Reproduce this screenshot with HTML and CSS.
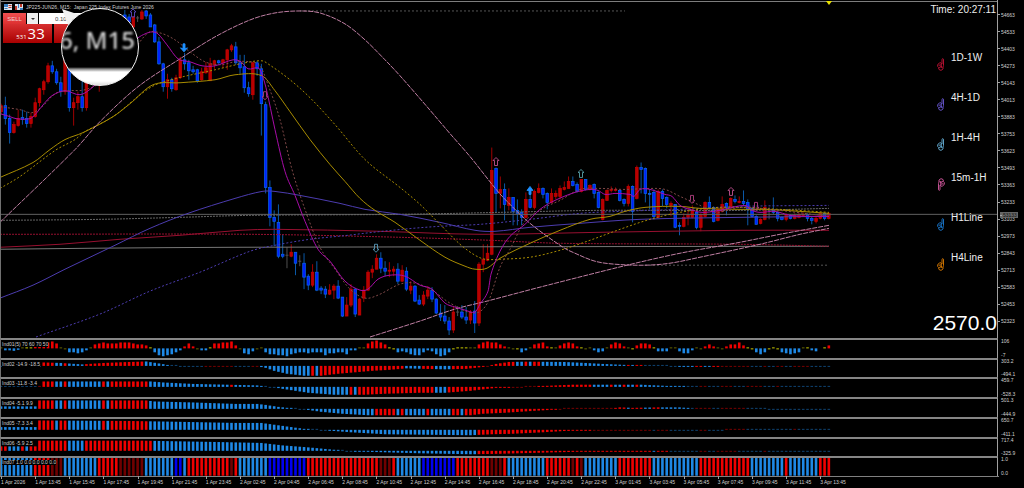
FILE: index.html
```html
<!DOCTYPE html>
<html lang="en">
<head>
  <meta charset="utf-8">
  <meta name="viewport" content="width=device-width, initial-scale=1.0">
  <title>JP225-JUN26, M15</title>
  <link rel="stylesheet" href="styles.css">
</head>
<body>
  <main class="terminal">
    <section class="pane main-pane">
      <div class="plot">
        <svg class="canvas" id="price" viewBox="1 0 996 339" preserveAspectRatio="none"></svg>

        <header class="title-bar">
          <svg class="title-icon" viewBox="0 0 8 6"><path fill="#d8e4ee" d="M0 0h8v6H0z"/><path fill="#3b7fc0" d="M0 0h4v3H0z"/><path fill="#c0392b" d="M4.500 1h3v1h-3zM4.500 3h3v1h-3z"/><path fill="#3b7fc0" d="M.5 4h3v1h-3z"/></svg>
          <svg class="title-icon" viewBox="0 0 8 6"><path fill="#d8e4ee" d="M0 0h8v6H0z"/><path fill="#c0392b" d="M0 2h2v4H0zM5 0h2v3H5z"/><path fill="#3b7fc0" d="M3 0h1v4H3zM5 4h3v2H5z"/></svg>
          <span>JP225-JUN26, M15:&nbsp; Japan 225 Index Futures June 2026</span>
        </header>

        <form class="trade">
          <div class="trade-top">
            <button type="button" class="sell">SELL</button>
            <button type="button" class="drop" aria-label="Volume presets"><svg viewBox="0 0 4 2"><path d="M0 0h4l-2 2z"/></svg></button>
            <input class="volume" type="text" value="0.10" aria-label="Volume">
          </div>
          <div class="trade-prices">
            <button type="button" class="price"><small>531</small>33</button>
            <button type="button" class="price" aria-label="Buy"></button>
          </div>
        </form>

        <svg class="lens-tail" viewBox="0 0 30 30"><path d="M0 0L24 8L10 26Z"/></svg>
        <div class="lens"><span class="lens-text">6, M15</span></div>

        <p class="clock">Time: 20:27:11</p>

        <ul class="signals">
          <li><svg class="hand crimson"><use href="#hand"/></svg>1D-1W</li>
          <li><svg class="hand violet"><use href="#hand"/></svg>4H-1D</li>
          <li><svg class="hand sky"><use href="#hand"/></svg>1H-4H</li>
          <li><svg class="hand pink down"><use href="#hand"/></svg>15m-1H</li>
          <li><svg class="hand blue"><use href="#hand"/></svg>H1Line</li>
          <li><svg class="hand orange"><use href="#hand"/></svg>H4Line</li>
        </ul>

        <p class="total">2570.0</p>
      </div>
      <div class="scale price-scale" id="priceScale"></div>
    </section>

    <section class="pane"><div class="plot"><svg class="canvas" id="ind1"></svg><span class="name">Ind01(5) 70 60 70 50</span></div><div class="scale"><span>106</span><span>-7</span></div></section>
    <section class="pane"><div class="plot"><svg class="canvas" id="ind2"></svg><span class="name">Ind02 -14.9 -18.5</span></div><div class="scale"><span>303.2</span><span>-494.1</span></div></section>
    <section class="pane"><div class="plot"><svg class="canvas" id="ind3"></svg><span class="name">Ind03 -11.8 -3.4</span></div><div class="scale"><span>459.7</span><span>-528.3</span></div></section>
    <section class="pane"><div class="plot"><svg class="canvas" id="ind4"></svg><span class="name">Ind04 -5.1 9.9</span></div><div class="scale"><span>501.3</span><span>-444.9</span></div></section>
    <section class="pane"><div class="plot"><svg class="canvas" id="ind5"></svg><span class="name">Ind05 -7.3 3.4</span></div><div class="scale"><span>650.7</span><span>-411.1</span></div></section>
    <section class="pane"><div class="plot"><svg class="canvas" id="ind6"></svg><span class="name">Ind06 -5.9 2.5</span></div><div class="scale"><span>717.4</span><span>-325.9</span></div></section>
    <section class="pane"><div class="plot"><svg class="canvas" id="ind7"></svg><span class="name">Ind07 1.0 0.0 0.0 0.0 0.0</span></div><div class="scale"><span>1.0</span><span>0.0</span></div></section>

    <footer class="dates"><div class="date-row" id="dates"></div></footer>
  </main>

  <svg class="defs">
    <symbol id="hand" viewBox="0 0 8 13">
      <path d="M5 6V1.200Q5.800 0 6.500 1.200V7.500L6 9V11Q4 13.500 2 11.500L1.500 9.500L.7 8.500V6.500L2.500 5L4 4.800L5 6L3 7.200L1.500 7M3 8.500L4.500 7.500V9.500M2 9.500Q4 8.500 5.500 9.500"/>
    </symbol>
  </svg>
  <script src="chart.js"></script>
</body>
</html>
```
FILE: styles.css
```css
* {
  box-sizing: border-box;
}
body {
  margin: 0;
  background-color: #000;
  color: #d0d0d0;
  font-family: "Liberation Sans", Arial, sans-serif;
  font-size: 5px;
  line-height: 6px;
}
button, input {
  font-family: inherit;
  margin: 0;
  padding: 0;
  border: none;
}
.terminal {
  display: grid;
  grid-template-rows: minmax(0, 120fr) repeat(7, minmax(0, 7fr)) 12px;
  height: 100vh;
}
.pane {
  display: grid;
  grid-template-columns: 1fr 26px;
  grid-template-rows: minmax(0, 1fr);
  min-height: 0;
}
.plot {
  position: relative;
  min-width: 0;
  min-height: 0;
  border-top: 2px solid #858585;
  border-left: 1px solid #707070;
  border-right: 1px solid #a0a0a0;
}
.main-pane .plot {
  border-top: none;
}
.canvas {
  display: block;
  width: 100%;
  height: 100%;
}
.defs {
  position: absolute;
  width: 0;
  height: 0;
}

/* scales */
.scale {
  display: flex;
  flex-direction: column;
  justify-content: space-between;
  min-height: 0;
  padding-left: 3px;
}
.price-scale {
  position: relative;
  padding: 6px 0 8px;
}
.price-scale span {
  flex: 1;
  display: flex;
  align-items: center;
  gap: 1px;
}
.price-scale span::before {
  content: "";
  width: 2px;
  height: 1px;
  background-color: #a0a0a0;
}
.price-scale .bid {
  position: absolute;
  top: 212px;
  left: 2px;
  height: 6px;
  padding-right: 1px;
  background-color: #666;
  color: #111;
}
.name {
  position: absolute;
  top: 2px;
  left: 1px;
  background-color: #000;
  line-height: 5px;
  white-space: nowrap;
}
.dates {
  padding-right: 26px;
  background: linear-gradient(#808080, #808080) 0 0 / calc(100% - 25px) 1px no-repeat;
}
.date-row {
  display: grid;
  grid-template-columns: repeat(25, 1fr);
  width: 85.5%;
  margin-left: 1px;
}
.date-row span {
  padding: 3px 0 1px;
  white-space: nowrap;
  background: linear-gradient(#a0a0a0, #a0a0a0) 0 0 / 1px 3px no-repeat;
}

/* title and one click trading */
.title-bar {
  position: absolute;
  top: 4px;
  left: 3px;
  display: flex;
  gap: 3px;
  align-items: center;
  white-space: nowrap;
}
.title-icon {
  width: 8px;
  height: 6px;
}
.trade {
  position: absolute;
  top: 13px;
  left: 2px;
  width: 100px;
}
.trade-top {
  display: flex;
  height: 11px;
}
.sell {
  width: 23px;
  background: linear-gradient(#f25050, #dd3030);
  color: #f3d0d0;
  font-size: 6px;
}
.drop {
  width: 11px;
  margin: 0 1px;
  background-color: #eee;
}
.drop svg {
  display: block;
  width: 4px;
  height: 2px;
  margin: 0 auto;
  fill: #333;
}
.volume {
  flex: 1;
  min-width: 0;
  padding-left: 16px;
  background-color: #fff;
  color: #444;
  font-size: 6px;
}
.trade-prices {
  display: flex;
  gap: 2px;
}
.price {
  flex: 1;
  height: 19px;
  padding-left: 6px;
  background: linear-gradient(#d83030, #a80000);
  color: #fff;
  font-family: "Open Sans", "Noto Sans", sans-serif;
  font-size: 15px;
  line-height: 19px;
}
.price small {
  margin-right: 1px;
  font-size: 6px;
}

/* magnifier */
.lens-tail {
  position: absolute;
  top: 9px;
  left: 61px;
  width: 30px;
  height: 30px;
  fill: #f2f2f2;
}
.lens {
  position: absolute;
  top: 8px;
  left: 60px;
  width: 78px;
  height: 78px;
  overflow: hidden;
  border: 1px solid #f2f2f2;
  border-radius: 50%;
  background: linear-gradient(#000 58px, #888 60px, #fff 63px, #fff 72px, #ddd);
}
.lens-text {
  position: absolute;
  top: 16px;
  right: 3px;
  color: #d0d0d0;
  font-family: "Noto Sans", sans-serif;
  font-size: 24px;
  font-weight: 500;
  line-height: 30px;
  white-space: nowrap;
  filter: blur(1px);
}

/* right side overlay */
.clock {
  position: absolute;
  top: 4px;
  right: 1px;
  margin: 0;
  color: #eee;
  font-size: 10px;
  line-height: 12px;
}
.signals {
  position: absolute;
  top: 52px;
  right: 0;
  display: flex;
  flex-direction: column;
  gap: 28px;
  width: 60px;
  margin: 0;
  padding: 0;
  list-style: none;
  color: #eee;
  font-size: 10px;
  line-height: 12px;
}
.signals li {
  display: flex;
  gap: 6px;
  height: 12px;
}
.hand {
  flex: none;
  width: 8px;
  height: 13px;
  margin-top: 6px;
  fill: none;
  stroke: currentColor;
  stroke-width: 1;
}
.down {
  transform: rotate(180deg);
}
.crimson { color: #b01030; }
.violet { color: #6050c0; }
.sky { color: #5da0c4; }
.pink { color: #c05090; }
.blue { color: #1870c0; }
.orange { color: #c87000; }
.total {
  position: absolute;
  right: 0;
  bottom: 4px;
  margin: 0;
  color: #fff;
  font-size: 21px;
  line-height: 22px;
}
```
FILE: chart.js
```javascript
const STEP = 4.2667;
const colors = { r: '#f00000', b: '#1e88e5', n: '#0000f0', d: '#700000', y: '#c8c800' };

function xOf(i) {
  return 1.1 + i * STEP;
}

// body top, body bottom, high, low, colour
const candles = `106 112 104 114 r;106 119 97 125 b;119 133 115 144 b;125 133 122 134 r;119 126 110 127 r;118 120 110 125 b;119 124 112 128 b;117 124 113 128 r;103 117 98 118 r;89 103 88 107 r;
82 90 80 95 r;66 82 63 84 r;66 72 61 74 b;72 83 69 85 b;83 92 77 97 b;55 92 40 95 r;55 108 50 112 b;103 108 98 126 r;97 103 92 110 r;97 108 80 112 b;
75 108 70 111 r;72 78 68 84 b;72 80 68 84 r;75 85 70 92 r;60 75 55 80 r;50 62 45 66 r;40 52 36 58 r;30 42 26 46 r;20 32 18 36 r;15 22 10 25 b;
17 22 14 25 b;17 27 16 30 r;18 19 16 22 g;12 19 10 20 r;11 16 10 19 b;15 27 13 27 b;25 42 24 43 b;42 64 37 65 b;64 87 63 92 b;80 87 74 99 r;
80 89 78 92 b;78 90 75 91 r;60 78 57 79 r;60 64 53 70 b;63 71 60 80 b;70 72 66 74 b;70 81 69 83 b;72 80 68 81 r;68 73 62 74 r;64 81 58 81 r;
61 65 60 69 r;61 63 60 64 b;60 63 59 68 r;50 60 49 70 r;46 50 44 52 r;47 63 42 65 b;63 68 55 74 b;67 88 55 93 b;88 94 82 97 b;63 95 62 100 r;
63 69 61 76 b;69 104 64 136 b;105 188 102 194 b;188 218 181 227 b;218 222 211 247 b;223 257 205 259 b;255 257 235 259 b;256 257 248 269 g;253 257 245 258 r;253 264 253 276 b;
262 263 256 267 g;264 278 254 290 b;277 286 275 291 b;273 286 265 288 r;273 291 262 292 b;289 291 287 295 b;290 295 287 299 b;291 295 285 296 r;287 291 285 300 r;287 299 281 300 b;
298 317 298 318 b;306 317 298 317 r;290 306 285 308 r;290 315 289 318 b;300 316 299 316 r;291 299 287 303 r;273 291 271 292 r;270 273 266 279 r;259 270 255 270 r;259 269 253 274 b;
269 272 262 277 b;271 272 263 278 r;270 272 267 277 r;270 282 264 285 b;271 282 266 283 r;272 290 268 292 b;287 291 282 295 r;287 302 286 303 b;301 305 296 306 b;296 305 292 307 r;
291 297 287 300 r;291 300 288 303 b;300 314 299 315 b;314 318 305 322 b;317 322 306 325 b;322 331 318 336 b;313 331 307 334 r;313 315 307 317 g;313 318 306 320 b;318 321 308 325 b;
313 321 311 325 r;312 324 302 334 b;265 324 263 327 r;260 265 245 273 r;254 261 245 262 r;171 255 148 256 r;169 194 168 213 b;190 194 177 209 r;190 205 184 221 b;198 206 189 211 r;
198 212 198 226 b;211 214 200 226 b;213 218 210 226 b;200 218 193 219 r;200 208 192 209 b;192 208 190 210 r;189 193 184 194 r;189 195 188 199 b;194 203 193 210 b;194 203 189 204 r;
194 197 191 200 r;189 197 186 200 r;188 190 182 191 r;182 189 177 189 r;182 186 177 187 b;185 192 183 193 b;180 192 180 193 r;180 190 180 191 b;186 190 185 191 r;185 194 184 199 b;
193 208 192 209 b;200 220 199 221 r;191 201 190 201 r;190 191 187 193 r;190 191 188 192 r;191 201 190 202 b;200 204 199 207 b;187 204 185 207 r;187 212 186 223 b;168 199 166 200 r;
168 170 163 194 b;169 194 168 203 b;194 195 190 210 b;193 217 190 220 b;192 218 190 218 r;192 199 190 207 b;198 205 197 209 b;204 206 202 217 r;205 228 205 229 b;226 227 223 236 b;
218 227 214 228 r;216 218 208 226 r;211 218 206 219 r;213 228 212 230 b;215 228 214 232 r;203 217 202 218 r;203 209 197 210 b;208 222 207 223 b;210 221 208 222 r;205 212 197 213 r;
204 208 203 216 b;199 208 198 208 r;200 202 196 204 b;202 203 197 204 r;202 204 191 207 b;203 210 200 226 b;209 217 208 218 b;217 225 216 225 b;220 224 219 225 r;208 220 201 221 r;
211 212 208 220 g;211 213 198 215 b;213 219 212 222 b;218 220 217 221 b;216 220 214 222 r;216 219 215 220 b;216 219 214 220 r;215 218 213 219 r;215 216 213 217 r;215 219 214 222 b;
219 221 217 225 b;219 222 216 224 r;214 219 213 220 r;214 219 213 221 b;214 219 213 220 r`;

// stroke, dash, points
const lines = [
  ['#606060', '', '0,215 998,215'],
  ['#777', '', '0,250 90,249 240,248 829,247'],
  ['#666', '2 1', '0,221 100,220 180,218 250,216 400,215 500,213 600,211 740,211 829,209'],
  ['#555', '2 2', '300,11 625,11'],
  ['#555', '2 2', '645,266 829,266'],
  ['#981030', '', '0,248 60,245 120,240 180,236 240,231 275,230 380,232 480,235 600,233 740,231 829,231'],
  ['#981030', '2 1', '0,235 250,235 400,238 490,241 560,244 740,245 829,247'],
  ['#4c3cb0', '', '0,299 33,286 65,270 90,258 115,246 150,229 188,214 235,199 262,192 275,192 300,196 340,204 365,210 400,215 440,223 475,231 495,232 530,228 580,224 640,220 740,218 829,217'],
  ['#4c3cb0', '2 2', '36,338 100,315 150,292 200,273 250,252 275,246 310,240 348,236 373,233 413,229 440,227 480,225 530,220 580,214 620,212 680,210 740,207 829,206'],
  ['#a88c00', '', '0,178 33,163 50,150 65,140 83,133 113,117 130,104 153,85 180,83 215,80 235,75 262,76 275,91 290,112 310,140 330,165 345,182 360,199 375,211 395,223 420,241 445,258 465,267 475,270 487,269 500,259 530,244 560,231 590,220 610,217 625,212 645,208 680,207 700,209 740,210 765,210 800,212 829,214'],
  ['#a88c00', '2 2', '0,189 20,177 55,151 75,140 85,132 113,117 150,88 175,79 215,70 245,63 262,61 268,64 290,80 310,98 335,125 365,160 400,188 420,205 440,225 460,245 475,256 485,260 500,260 530,258 560,251 590,241 620,230 650,220 680,213 720,208 780,210 829,213'],
  ['#c080a4', '5 1', '0,223 75,150 100,122 138,87 180,59 215,37 250,20 275,13 300,11 320,13 345,24 365,40 385,60 400,76 427,107 450,134 470,157 497,191 510,205 530,224 563,248 575,254 595,262 615,265 645,266 670,264 700,258 760,245 800,235 829,229'],
  ['#c080a4', '5 1', '370,338 420,322 455,310 487,302 540,288 627,266 680,254 740,243 780,235 829,226'],
  ['#804848', '2 2', '0,107 20,110 32,113 42,107 55,94 67,91 85,90 105,80 130,55 148,33 160,33 175,40 190,52 205,62 220,65 235,62 250,62 260,66 268,85 280,120 292,170 305,210 320,248 335,270 350,290 365,299 378,296 400,285 415,284 432,291 450,304 475,314 488,303 500,268 510,250 525,222 545,208 560,201 580,190 600,189 625,190 650,189 665,190 680,197 700,206 715,213 740,208 770,210 829,217'],
  ['#a80ca8', '', '0,114 10,117 16,119 30,119 36,114 44,104 52,96 65,91 80,95 92,88 110,70 125,50 138,38 145,34 152,32 158,34 167,45 178,59 190,62 202,66 215,66 233,60 241,62 248,69 258,68 261,72 266,88 275,130 285,172 295,196 305,222 318,250 330,262 345,282 360,291 368,290 378,280 390,276 405,277 420,286 432,290 445,304 455,308 465,311 475,313 480,305 488,292 491,275 500,252 510,237 525,225 540,210 555,201 575,193 590,190 598,191 605,195 615,194 630,195 634,197 640,190 650,190 665,195 672,197 680,206 690,210 702,213 720,211 745,206 752,211 760,213 775,212 790,216 810,217 829,217']
];

// x, y, kind, colour
const arrows = [
  [133, 13, 'up', '#5a48c0'], [184, 48, 'downFull', '#1e90ff'], [265, 96, 'down', '#b04080'],
  [376, 249, 'down', '#5898b8'], [496, 162, 'up', '#c05090'], [530, 191, 'upFull', '#1e90ff'],
  [581, 174, 'up', '#58a0a8'], [692, 200, 'down', '#b04080'], [731, 192, 'up', '#c05090'],
  [756, 207, 'down', '#b04080']
];
const arrowPaths = {
  up: 'M0 -4L3 -1H1.500V4H-1.500V-1H-3Z',
  down: 'M0 4L3 1H1.500V-4H-1.500V1H-3Z',
  upFull: 'M0 -4L3 0H1V4H-1V0H-3Z',
  downFull: 'M0 4L3.500 0L1 1V-4H-1V1L-3.500 0Z'
};

// rounds the corners between neighbouring points
function smooth(points) {
  const p = points.split(' ').map(s => s.split(',').map(Number));
  let d = `M${p[0]}`;
  for (let i = 0; i < p.length - 1; i++) {
    const [ax, ay] = p[i];
    const [bx, by] = p[i + 1];
    const [px, py] = p[i - 1] || p[i];
    const [nx, ny] = p[i + 2] || p[i + 1];
    const t = (bx - ax) / 3;
    const sa = (by - py) / (bx - px);
    const sb = (ny - ay) / (nx - ax);
    d += `C${ax + t} ${ay + sa * t} ${bx - t} ${by - sb * t} ${bx} ${by}`;
  }
  return d;
}

function drawPrice() {
  let out = '<path d="M0 1.500H998" stroke="#808080"/>';
  candles.split(';').forEach((row, i) => {
    const [top, bottom, high, low, c] = row.trim().split(' ');
    const x = xOf(i);
    const wick = c === 'r' ? '#a00000' : c === 'b' ? '#0a58a8' : '#505050';
    out += `<path d="M${x} ${high}V${low}" stroke="${wick}"/>`;
    if (c === 'g') {
      out += `<path d="M${x - 1.5} ${top}h3" stroke="#505050"/>`;
    } else {
      const edge = c === 'r' ? '#c80000' : '#0a68e8';
      const fill = c === 'r' ? '#b80000' : '#0020ff';
      out += `<rect x="${x - 1.3}" y="${top}" width="2.600" height="${bottom - top}" fill="${fill}" stroke="${edge}" stroke-width=".7"/>`;
    }
  });
  lines.forEach(([stroke, dash, points]) => {
    out += `<path d="${smooth(points)}" fill="none" stroke="${stroke}" stroke-dasharray="${dash}"/>`;
  });
  arrows.forEach(([x, y, kind, color]) => {
    const fill = kind.includes('Full') ? color : 'none';
    out += `<path transform="translate(${x} ${y})" d="${arrowPaths[kind]}" fill="${fill}" stroke="${color}" stroke-width=".9"/>`;
  });
  out += '<path d="M826 1h6l-3 4z" fill="#e8e000"/>';
  document.getElementById('price').innerHTML = out;
}

const osc = [.5, -2, -2, -2.5, -1.5, .5, 1, 1, 2, 5, 6, 6, 7, 5, .5, -.5, -4, -4, -5, -4, -2, .5, 4, 5, 6, 5, 5, 5, 6, 6, 6, 5, 4, 4, 3, 1,
  -4, -7, -8, -7, -6, -4, -2, 2, 5, 2, -.5, -2, -2, 1, 5, 5, 6, 6, 7, 3, -.5, -5, -6, -3, -.5, .5, -4, -6, -6, -7, -7, -8, -6, -5, -4, -4,
  -5, -4, -4, -4, -7, -5, -5, -4, -4, -6, -2, -2, .5, .5, 5, 7, 8, 6, 4, .8, -.8, -4, -3, -4, -6, -7, -7, -4, -2, -3, -6, -8, -7, -4, -.6,
  1, 1, 1, .5, .5, 4, 6, 7, 6, 6, 4, 2, .5, -.5, -1, -4, -2, .5, 4, 5, 6, 2, 1, .5, 3, 5, 6, 5, 2, 1, -.5, .5, -2, -4, -3, .5, 4, 6, 5, 2,
  .5, -1, 3, 5, 5, 4, 1, -3, -3, -3, .5, .5, -3, -5, -5, -2, .5, -.5, 2, 4, 2, .5, -.5, 2, 4, 4, 6, 3, 1, -1, -4, -6, -4, -1, 1, -1, -4,
  -5, -6, -5, -4, .5, 1, -2, -3, 0, 1, 3];

// base: zero line, keys: [bar, height] pairs, runs: colour + count
const panes = [
  { id: 'ind2', base: 6, keys: [[0, 0], [9, 0], [10, 3.5], [14, 3], [19, 1.5], [24, 3], [30, 4], [34, 4.5], [37, 2.5], [39, 1], [42, -.3], [60, -.4], [62, -2], [64, -5], [67, -8], [71, -10], [75, -10], [79, -8], [83, -6.5], [87, -5], [91, -4], [95, -2.5], [99, -3], [104, -3.5], [109, -3], [113, -1], [116, 2], [119, 4], [123, 4.3], [132, 4], [137, 3], [141, 2], [148, .7], [155, .4], [160, -1], [166, -1], [170, -.4], [194, -.4]],
    runs: 'b10 r3 b2 r1 b4 r14 b14 r7 b4 r2 b12 r1 b1 r20 b4 r3 b4 r15 b2 r1 b1 r2 b20 r1 b1 r2 b12 r2 b2 r9 b3 r1 b2 r2 b2 r4' },
  { id: 'ind3', base: 8, keys: [[0, .3], [8, .3], [9, .5], [10, 5.5], [35, 5.5], [38, 4.5], [45, 3], [55, 2], [60, 1.5], [62, .5], [64, -.5], [66, -2], [69, -4], [72, -6], [78, -8], [85, -8], [90, -7], [98, -6], [104, -6], [110, -4], [116, -1], [120, -.5], [125, .5], [130, 1.5], [134, 2.2], [150, 2.2], [156, 1], [162, .4], [194, .4]],
    runs: 'b9 r4 b2 r1 b8 r1 b1 r9 b19 r1 b27 r1 b1 r18 b3 r34 b4 r1 b2 r1 b2 r1 b14 r2 b3 r3 b3 r4 b3 r1 b12 r1 b1 r1' },
  { id: 'ind4', base: 10, keys: [[0, 2.5], [8, 2.5], [9, 8.5], [34, 8.5], [36, 7.5], [45, 6.5], [55, 5], [60, 5], [62, 4], [65, 2], [68, .6], [71, -.5], [75, -3], [80, -5], [86, -6.5], [110, -6.5], [113, -5], [118, -4], [125, -2], [129, -1], [133, .4], [143, .5], [145, 1.5], [148, 1], [154, 1.5], [159, 1.5], [162, .5], [194, -.4]],
    runs: 'b9 r4 b2 r1 b8 r1 b1 r9 b53 r5 b1 r1 b5 r1 b5 r2 b1 r38 b1 r3 b2 r2 b8 r4 b2 r6 b21' },
  { id: 'ind5', base: 11, keys: [[0, 2.8], [8, 2.8], [9, 9.5], [30, 9], [40, 8.3], [55, 7], [61, 7], [66, 4], [71, 1], [76, -.5], [82, -2.5], [90, -4.5], [110, -5.5], [115, -4.5], [120, -4], [127, -2.5], [132, -1.2], [139, -.5], [194, .4]],
    runs: 'b9 r4 b1 r2 b8 r1 b1 r9 b77 r41 b1 r3 b7 r2 b4 r5 b11 r1 b8' },
  { id: 'ind6', base: 12, keys: [[0, 4.5], [8, 4.5], [9, 10.3], [33, 10.3], [50, 9], [61, 8], [66, 5.5], [72, 3.5], [77, 1.5], [82, -.5], [90, -1.5], [98, -2.5], [110, -3.5], [117, -3], [130, -1.5], [138, -.7], [194, -.4]],
    runs: 'r2 b3 r1 b1 r9 b4 r16 b76 r41 b1 r3 b7 r2 b2 r5 b6 r1 b16' }
];

function expand(runs) {
  return runs.split(' ').map(r => r[0].repeat(Number(r.slice(1)))).join('');
}

function valueAt(keys, i) {
  for (let k = 1; k < keys.length; k++) {
    const [x0, y0] = keys[k - 1];
    const [x1, y1] = keys[k];
    if (i <= x1) {
      return y0 + (y1 - y0) * (i - x0) / (x1 - x0);
    }
  }
  return 0;
}

function bar(i, base, v, color) {
  const h = Math.max(Math.abs(v), 1);
  const y = v > 0 ? base - h : base;
  const faint = Math.abs(v) < .6 ? ' opacity=".5"' : '';
  return `<rect x="${xOf(i) - 1.3}" y="${y}" width="2.600" height="${h}" fill="${color}"${faint}/>`;
}

function paint(id, html) {
  const svg = document.getElementById(id);
  svg.setAttribute('viewBox', '1 0 996 18');
  svg.setAttribute('preserveAspectRatio', 'none');
  svg.innerHTML = html;
}

function drawIndicators() {
  paint('ind1', osc.map((v, i) => {
    if (v === 0) return '';
    const c = Math.abs(v) <= 1 ? 'y' : v > 0 ? 'r' : 'b';
    return bar(i, 8.5, v, colors[c]);
  }).join(''));

  panes.forEach(p => {
    const c = expand(p.runs);
    let html = '';
    for (let i = 0; i < 195; i++) {
      html += bar(i, p.base, valueAt(p.keys, i), colors[c[i] || 'b']);
    }
    paint(p.id, html);
  });

  const full = expand('b8 r4 d3 b8 r5 d6 b7 n2 b1 r10 d1 r1 b7 n9 r17 d3 r1 b6 n8 r8 d3 r1 b9 r6 d1 r1 d1 b8 r8 b11 r12 b8 r1 b7 r3');
  paint('ind7', [...full].map((c, i) => bar(i, 18, 18, colors[c])).join(''));
}

function drawScales() {
  let html = '';
  for (let k = 0; k < 19; k++) {
    html += `<span>${54663 - 130 * k}</span>`;
  }
  html += '<span class="bid">53133</span>';
  document.getElementById('priceScale').innerHTML = html;

  const labels = ['1 Apr 2026'];
  for (let h = 13; h < 24; h += 2) labels.push(`1 Apr ${h}:45`);
  for (let h = 2; h < 24; h += 2) labels.push(`2 Apr ${String(h).padStart(2, '0')}:45`);
  for (let h = 1; h < 14; h += 2) labels.push(`3 Apr ${String(h).padStart(2, '0')}:45`);
  document.getElementById('dates').innerHTML = labels.map(l => `<span>${l}</span>`).join('');
}

drawPrice();
drawIndicators();
drawScales();
```
